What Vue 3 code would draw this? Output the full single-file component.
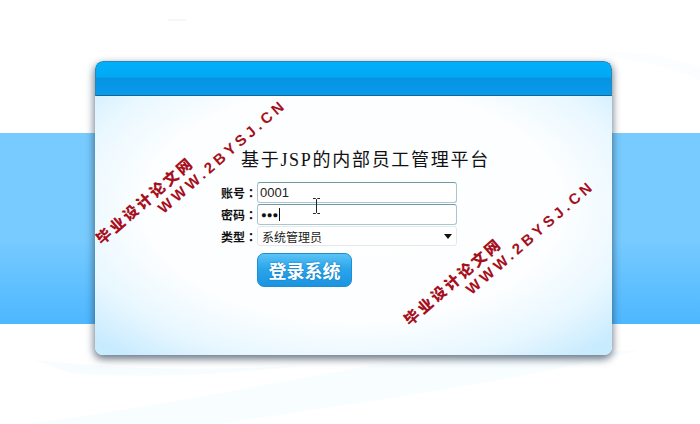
<script setup>
const watermarks = [
  { id: 'left', cls: 'wm-left' },
  { id: 'right', cls: 'wm-right' },
]
</script>

<template>
  <div class="page">
    <svg class="swoosh" viewBox="0 0 700 424" aria-hidden="true">
      <path d="M35 360 C110 368 180 372 300 366 C210 376 130 378 70 373 Z" fill="#f4fbff" opacity="0.7" />
      <path d="M25 424 C170 405 260 385 370 366 C480 355 560 355 640 350 C500 385 340 405 220 424 Z" fill="#f8fdff" />
      <path d="M590 52 C630 50 670 56 700 68 L700 80 C670 66 630 60 590 52 Z" fill="#fbfdff" />
      <path d="M168 20 H186" stroke="#f0f0f0" stroke-width="1" />
    </svg>
    <div class="band"></div>
    <main class="card">
      <header class="card-head"></header>
      <section class="card-body">
        <h1 class="title">基于JSP的内部员工管理平台</h1>
        <form class="form" @submit.prevent>
          <div class="row">
            <label class="label">账号：</label>
            <div class="field field-text">0001</div>
          </div>
          <div class="row">
            <label class="label">密码：</label>
            <div class="field field-text">
              <span class="dots">●●●</span><span class="caret"></span>
              <svg class="ibeam" width="9" height="16" viewBox="0 0 9 16" aria-hidden="true">
                <path d="M1 .5h2.500l1 1 1-1H8M4.500 1.500v13M1 15.500h2.500l1-1 1 1H8" fill="none" stroke="#222" stroke-width="1" />
              </svg>
            </div>
          </div>
          <div class="row">
            <label class="label">类型：</label>
            <div class="field field-select">
              <span>系统管理员</span>
              <svg width="8" height="5" viewBox="0 0 8 5" aria-hidden="true"><path d="M0 0h8L4 5z" fill="#111" /></svg>
            </div>
          </div>
          <div class="actions">
            <button type="button" class="login">登录系统</button>
          </div>
        </form>
      </section>
    </main>
    <div v-for="w in watermarks" :key="w.id" class="watermark" :class="w.cls">
      <div class="wm-cn">毕业设计论文网</div>
      <div class="wm-en">WWW.2BYSJ.CN</div>
    </div>
  </div>
</template>

<style>
html, body { margin: 0; background: #fff; }
</style>

<style scoped>
.page {
  position: relative;
  width: 700px;
  height: 424px;
  overflow: hidden;
  display: grid;
  grid-template-columns: 700px;
  grid-template-rows: 424px;
  background: #fff;
  font-family: "Liberation Sans", "Noto Sans CJK SC", sans-serif;
}
.swoosh, .band, .card { grid-area: 1 / 1; }
.swoosh { width: 700px; height: 424px; display: block; }
.band {
  margin-top: 133px;
  height: 191px;
  background: linear-gradient(#78cbff 0, #78cbff 55%, #4db7ff 100%);
}
.card {
  margin: 61px 0 0 95px;
  width: 517px;
  height: 294px;
  box-sizing: border-box;
  border-radius: 8px;
  box-shadow: -1px 4px 8px rgba(40, 60, 80, 0.6), 2px 2px 7px rgba(40, 60, 80, 0.25);
  overflow: hidden;
  display: flex;
  flex-direction: column;
}
.card-head {
  height: 35px;
  flex: none;
  box-sizing: border-box;
  border: 1px solid #2a86b4;
  border-bottom-color: #14668f;
  border-radius: 8px 8px 0 0;
  background: linear-gradient(#00b0fa 0, #02a8f4 45%, #0693e4 50%, #0a9beb 100%);
}
.card-body {
  flex: 1;
  display: flex;
  flex-direction: column;
  align-items: center;
  background: radial-gradient(ellipse 68% 76% at 50% 42%, #fff 0, #fcfeff 60%, #e8f7ff 82%, #c8ebfe 100%);
}
.title {
  margin: 52px 0 0 146px;
  align-self: flex-start;
  font-size: 18px;
  line-height: 24px;
  font-weight: 400;
  letter-spacing: 1.7px;
  color: #111;
  font-family: "Liberation Serif", "Noto Sans CJK SC", serif;
}
.form {
  margin-top: 10px;
  align-self: flex-start;
  margin-left: 126px;
  display: flex;
  flex-direction: column;
  gap: 1px;
}
.row { display: flex; align-items: center; gap: 2px; }
.label {
  width: 34px;
  font-size: 12px;
  font-weight: 700;
  color: #111;
  white-space: nowrap;
  font-family: "Liberation Sans", "Noto Sans CJK TC", sans-serif;
}
.field {
  position: relative;
  width: 200px;
  box-sizing: border-box;
  background: #fff;
  border-radius: 3px;
  display: flex;
  align-items: center;
  font-size: 12px;
  color: #222;
}
.field-text {
  height: 21px;
  padding-left: 2px;
  font-size: 13px;
  border: 1px solid #a9c6d0;
  border-top-color: #6f9aa6;
}
.dots { font-size: 9.500px; margin-left: 1px; color: #111; }
.caret { width: 1px; height: 13px; background: #111; margin-left: 1px; }
.ibeam { position: absolute; left: 54px; top: -7px; }
.field-select {
  height: 20px;
  padding: 0 4px;
  justify-content: space-between;
  border: 1px solid #e4e8ea;
}
.actions { margin: 6px 0 0 36px; }
.login {
  width: 95px;
  height: 34px;
  padding: 0;
  border: 1px solid #1c8fd6;
  border-radius: 7px;
  background: linear-gradient(#5cc3f5 0, #2aa6ec 45%, #1d93e0 100%);
  color: #fff;
  font-size: 18px;
  font-weight: 700;
  font-family: "Noto Sans CJK SC", sans-serif;
  text-shadow: 0 0 2px #0a6fb5;
}
.watermark {
  position: absolute;
  transform: rotate(-41deg);
  transform-origin: 0 0;
  color: #a60f1c;
  font-weight: 700;
  white-space: nowrap;
  text-shadow: 0 0 1px rgba(255, 255, 255, 0.6);
  line-height: 18px;
}
.wm-left { left: 92px; top: 234px; }
.wm-right { left: 400px; top: 315px; }
.wm-cn { font-size: 15px; letter-spacing: 2.700px; font-family: "Noto Sans CJK SC", sans-serif; font-weight: 900; }
.wm-en { font-size: 15px; letter-spacing: 3.800px; padding-left: 67px; font-family: "Liberation Sans", sans-serif; }
</style>
